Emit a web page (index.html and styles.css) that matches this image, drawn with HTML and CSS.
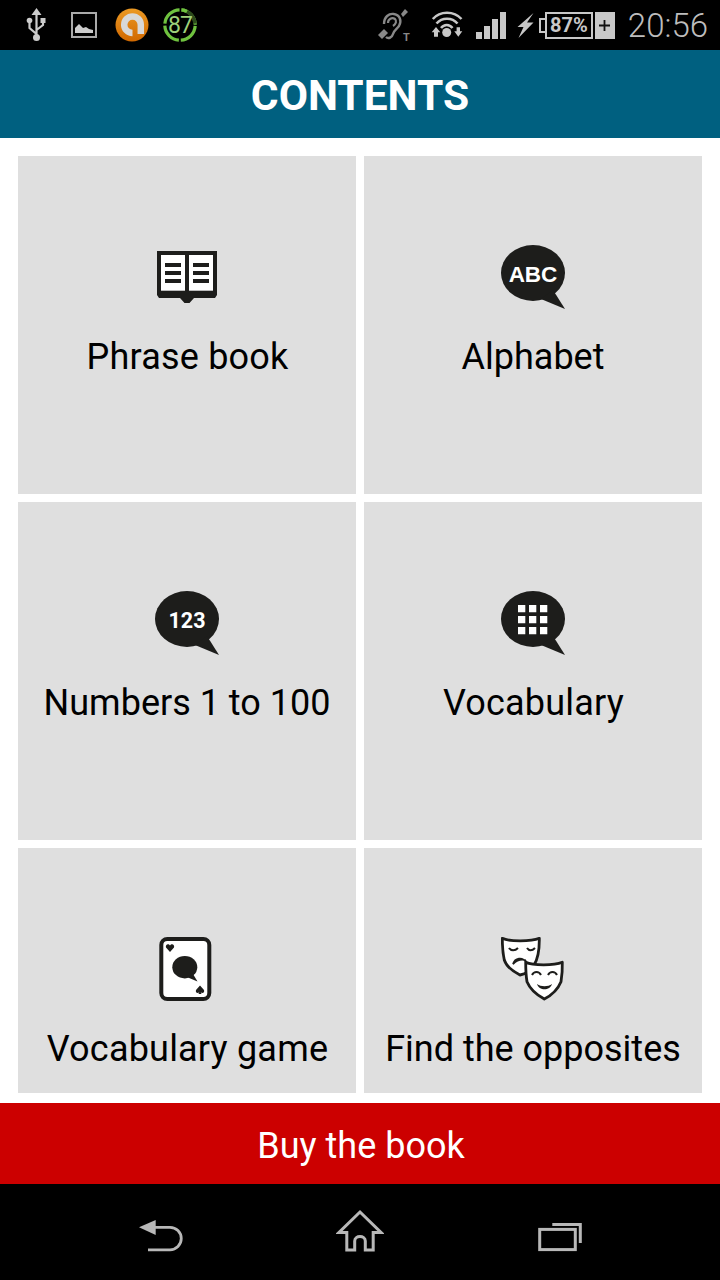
FILE: index.html
```html
<!DOCTYPE html>
<html lang="en">
<head>
  <meta charset="UTF-8">
  <meta name="viewport" content="width=device-width, initial-scale=1.0">
  <title>Contents</title>
  <link rel="stylesheet" href="styles.css">
</head>
<body>
  <div class="status-bar">
    <div class="status-left">
      <svg class="st-usb" width="20" height="34" viewBox="0 0 20 34">
        <path d="M10.500 0L15.500 7H5.500Z" fill="#ccc"/>
        <path d="M10.500 6V30M3.500 13V20L10.500 26M17 13V17L10.500 22" fill="none" stroke="#ccc" stroke-width="2.200"/>
        <circle cx="3.500" cy="12.500" r="2.800" fill="#ccc"/>
        <rect x="14.500" y="10" width="5" height="5" fill="#ccc"/>
        <circle cx="10.500" cy="29.500" r="3.500" fill="#ccc"/>
      </svg>
      <svg class="st-image" width="26" height="26" viewBox="0 0 26 26">
        <rect x="1" y="1" width="24" height="24" fill="none" stroke="#aaa" stroke-width="2"/>
        <path d="M4 21V16L8 12L12 16L15 15L18 17L22 18V21Z" fill="#ccc"/>
      </svg>
      <svg class="st-orange" width="34" height="34" viewBox="0 0 34 34">
        <defs>
          <linearGradient id="orange" x1="0" y1="0" x2="0" y2="1">
            <stop offset="0" stop-color="#ec9a24"/>
            <stop offset="1" stop-color="#d06800"/>
          </linearGradient>
        </defs>
        <circle cx="17" cy="17" r="16.500" fill="url(#orange)"/>
        <path d="M17.500 25A8.300 8.300 0 1 1 25.800 16.700V26" fill="none" stroke="#d8d8d8" stroke-width="6.500"/>
      </svg>
      <svg class="st-ring" width="34" height="34" viewBox="0 0 34 34">
        <circle cx="17" cy="17" r="15.200" fill="none" stroke="#6fc23f" stroke-width="3.200" stroke-dasharray="21.900 2" stroke-dashoffset="-1"/>
        <path d="M18.500 1.900A15.200 15.200 0 0 1 32.100 15.500" fill="none" stroke="#2c4a1c" stroke-width="3.400"/>
        <path d="M18.500 1.900A15.200 15.200 0 0 1 24 3.500" fill="none" stroke="#6fc23f" stroke-width="3.400"/>
        <text x="17" y="25" class="ring-text">87</text>
      </svg>
    </div>
    <div class="status-right">
      <svg class="st-hearing" width="34" height="34" viewBox="0 0 34 34">
        <path d="M7 16C7 9 12 5 17 6C23 7 25 13 22 18C20 21 17 22 16 26C15 30 11 31 9 29" fill="none" stroke="#888" stroke-width="2.400"/>
        <path d="M11 15C11 11 15 9 18 11C20 13 19 16 16 18" fill="none" stroke="#888" stroke-width="2.200"/>
        <path d="M1 27L7 21L11 25L5 31Z" fill="#888"/>
        <path d="M24 6L28 1L31 4L26 9Z" fill="#888"/>
        <text x="29.500" y="32.500" class="hearing-t">T</text>
      </svg>
      <svg class="st-wifi" width="31" height="28" viewBox="0 0 31 28">
        <path d="M0.800 8C8 -0.500 22 -0.500 29.500 8M4.500 12.500C10 6 20 6 25.500 12.500M9 17C12 13 17.500 13 20.500 17" fill="none" stroke="#c8c8c8" stroke-width="2.500"/>
        <circle cx="14.700" cy="21.500" r="4.500" fill="#c8c8c8"/>
        <path d="M4 16L8.300 21.300H6V25.700H2V21.300H-0.300Z" fill="#c8c8c8"/>
        <path d="M26.300 25.700L30.300 20.300H28V16.300H24.600V20.300H22.300Z" fill="#c8c8c8"/>
      </svg>
      <div class="signal">
        <span class="bar bar-1"></span>
        <span class="bar bar-2"></span>
        <span class="bar bar-3"></span>
        <span class="bar bar-4"></span>
      </div>
      <svg class="st-bolt" width="17" height="25" viewBox="0 0 17 25">
        <path d="M16.500 0L0.500 14H6.500L1.500 25L16.500 9.500H10Z" fill="#c8c8c8"/>
      </svg>
      <div class="battery">
        <span class="battery-body">87%</span>
      </div>
      <div class="charge-plus">
        <svg width="11" height="11" viewBox="0 0 11 11"><path d="M5.500 0V11M0 5.500H11" stroke="#111" stroke-width="1.800"/></svg>
      </div>
      <span class="clock">20:56</span>
    </div>
  </div>

  <div class="header">CONTENTS</div>

  <div class="grid">
    <div class="tile">
      <svg class="tile-icon" width="64" height="64" viewBox="0 0 64 64">
        <path d="M2 6H62V50L60 53H39L34.500 58H29.500L25 53H4L2 50Z" fill="#1d1d1b"/>
        <rect x="6" y="10" width="24" height="35.700" fill="#fff"/>
        <rect x="34" y="10" width="24" height="35.700" fill="#fff"/>
        <path d="M10 20H26M10 28H26M10 36H26M38 20H54M38 28H54M38 36H54" stroke="#1d1d1b" stroke-width="4"/>
      </svg>
      <div class="tile-label wide">Phrase book</div>
    </div>
    <div class="tile">
      <svg class="tile-icon" width="64" height="64" viewBox="0 0 64 64">
        <ellipse cx="32" cy="28" rx="32" ry="28" fill="#1d1d1b"/>
        <path d="M40 54L64 64L52 45Z" fill="#1d1d1b"/>
        <text x="32" y="37" class="bubble-text">ABC</text>
      </svg>
      <div class="tile-label">Alphabet</div>
    </div>
    <div class="tile">
      <svg class="tile-icon" width="64" height="64" viewBox="0 0 64 64">
        <ellipse cx="32" cy="28" rx="32" ry="28" fill="#1d1d1b"/>
        <path d="M40 54L64 64L52 45Z" fill="#1d1d1b"/>
        <text x="32" y="37" class="bubble-text bubble-num">123</text>
      </svg>
      <div class="tile-label">Numbers 1 to 100</div>
    </div>
    <div class="tile">
      <svg class="tile-icon" width="64" height="64" viewBox="0 0 64 64">
        <ellipse cx="32" cy="28" rx="32" ry="28" fill="#1d1d1b"/>
        <path d="M40 54L64 64L52 45Z" fill="#1d1d1b"/>
        <path d="M17 14h7.300v7.300h-7.300zM28 14h7.300v7.300h-7.300zM39 14h7.300v7.300h-7.300zM17 25h7.300v7.300h-7.300zM28 25h7.300v7.300h-7.300zM39 25h7.300v7.300h-7.300zM17 36h7.300v7.300h-7.300zM28 36h7.300v7.300h-7.300zM39 36h7.300v7.300h-7.300z" fill="#fff"/>
      </svg>
      <div class="tile-label wide">Vocabulary</div>
    </div>
    <div class="tile">
      <svg class="tile-icon" width="64" height="64" viewBox="0 0 64 64">
        <rect x="6.300" y="2" width="48" height="60" rx="6" fill="#fff" stroke="#1d1d1b" stroke-width="4"/>
        <ellipse cx="29.800" cy="30.200" rx="12.500" ry="11.200" fill="#1d1d1b"/>
        <path d="M33 40.500L42.500 44.500L38 37Z" fill="#1d1d1b"/>
        <path d="M15 15L11 10.500C10 7.500 13.500 6 15 8.500C16.500 6 20 7.500 19 10.500Z" fill="#1d1d1b"/>
        <path d="M45 48.500L49 53C50 56 46.800 57 45.700 55L46.500 57H43.500L44.300 55C43.200 57 40 56 41 53Z" fill="#1d1d1b"/>
      </svg>
      <div class="tile-label wide">Vocabulary game</div>
    </div>
    <div class="tile">
      <svg class="tile-icon" width="64" height="64" viewBox="0 0 64 64">
        <path d="M1.300 1.300C8 4.700 30 4.700 38.300 1.300C38.500 14 37 22 33 28C30 33 25 37 19 38C11 34 5 28 3.300 23C2 17 1.300 8 1.300 1.300Z" fill="#fff" stroke="#1d1d1b" stroke-width="2.800" stroke-linejoin="round"/>
        <path d="M8 11C10 14 14 14 17 11M26 11C28 14 31 14 34 11" fill="none" stroke="#1d1d1b" stroke-width="2"/>
        <path d="M12 27C14 21 21 19 26 26L24 23C20 22 16 23 12 27Z" fill="#1d1d1b" stroke="#1d1d1b" stroke-width="1.800"/>
        <path d="M24.700 25.300C32 28.700 53 28.700 61.300 25.300C61.500 33 61 39 60 44.700C57 52 51 58 43.300 62C36 58 29 52 26 44.700C25 39 24.700 33 24.700 25.300Z" fill="#fff" stroke="#1d1d1b" stroke-width="2.800" stroke-linejoin="round"/>
        <path d="M31 38C33 34 38 34 40 38M47 38C49 34 54 34 56 38" fill="none" stroke="#1d1d1b" stroke-width="2"/>
        <path d="M36 47C40 50 47 50 51 47C49 54 38 54 36 47Z" fill="#1d1d1b"/>
      </svg>
      <div class="tile-label">Find the opposites</div>
    </div>
  </div>

  <div class="buy-btn">Buy the book</div>

  <div class="nav-bar">
    <div class="nav-cell">
      <svg width="48" height="44" viewBox="0 0 48 44">
        <path d="M3 18.300L19.700 11V26Z" fill="#b8b8b8"/>
        <path d="M18 18.300H34A11.250 11.250 0 0 1 34 40.800H12" fill="none" stroke="#b8b8b8" stroke-width="2.800"/>
      </svg>
    </div>
    <div class="nav-cell">
      <svg width="48" height="44" viewBox="0 0 48 44">
        <path d="M24 3L45 23.500H37.200V41H29.300V32C29.300 26 18.700 26 18.700 32V41H10.800V23.500H3Z" fill="none" stroke="#b8b8b8" stroke-width="3"/>
      </svg>
    </div>
    <div class="nav-cell">
      <svg width="48" height="44" viewBox="0 0 48 44">
        <rect x="3.700" y="20.400" width="35.600" height="20.200" fill="none" stroke="#b8b8b8" stroke-width="3"/>
        <path d="M16.300 15.400H44.300V34" fill="none" stroke="#b8b8b8" stroke-width="3"/>
      </svg>
    </div>
  </div>
</body>
</html>
```

FILE: styles.css
```css
body {
  margin: 0;
  height: 1280px;
  overflow: hidden;
  background-color: #fff;
  font-family: Roboto, "Liberation Sans", sans-serif;
}

/* status bar */
.status-bar {
  height: 50px;
  background-color: #000;
  display: flex;
  justify-content: space-between;
  align-items: center;
}
.status-left {
  display: flex;
  align-items: center;
  padding-left: 26px;
}
.status-left svg, .status-right svg {
  display: block;
  overflow: visible;
}
.st-image { margin-left: 25px; }
.st-orange { margin-left: 18px; }
.st-ring { margin-left: 14px; }
.ring-text {
  font-family: Roboto, sans-serif;
  font-size: 23px;
  letter-spacing: -1px;
  fill: #9ed07a;
  text-anchor: middle;
}
.status-right {
  display: flex;
  align-items: center;
  padding-right: 12px;
}
.hearing-t {
  font-size: 11px;
  font-weight: bold;
  fill: #888;
  text-anchor: middle;
}
.st-wifi { margin-left: 21px; }
.signal {
  display: flex;
  align-items: flex-end;
  gap: 2px;
  height: 27px;
  margin-left: 13px;
}
.bar {
  width: 6px;
  background-color: #c8c8c8;
}
.bar-1 { height: 7px; }
.bar-2 { height: 13px; }
.bar-3 { height: 20px; }
.bar-4 { height: 27px; }
.st-bolt { margin-left: 11px; }
.battery {
  margin-left: 5px;
  display: flex;
  align-items: center;
}
.battery::before {
  content: "";
  box-sizing: border-box;
  width: 6px;
  height: 15px;
  border: 2px solid #c8c8c8;
  border-right: none;
}
.battery-body {
  box-sizing: border-box;
  width: 48px;
  height: 27px;
  border: 2px solid #c8c8c8;
  color: #c8c8c8;
  font-size: 20px;
  font-weight: bold;
  line-height: 23px;
  text-align: center;
}
.charge-plus {
  width: 20px;
  height: 27px;
  margin-left: 2px;
  background-color: #c8c8c8;
  display: flex;
  align-items: center;
  justify-content: center;
}
.clock {
  margin-left: 13px;
  color: #bdbdbd;
  font-size: 33px;
  font-weight: 300;
}

/* header */
.header {
  height: 88px;
  line-height: 92px;
  background-color: #006080;
  color: #fff;
  font-size: 42.5px;
  font-weight: bold;
  text-align: center;
}

/* grid of tiles */
.grid {
  display: grid;
  grid-template-columns: 338px 338px;
  grid-template-rows: 338px 338px 245px;
  gap: 8px;
  padding: 18px 18px 10px;
}
.tile {
  background-color: #dfdfdf;
  padding-top: 89px;
  text-align: center;
}
.tile-icon {
  display: block;
  margin: 0 auto;
}
.tile-label {
  margin-top: 26px;
  color: #000;
  font-size: 36px;
  line-height: 44px;
  white-space: nowrap;
}
.tile-label.wide {
  letter-spacing: 0.2px;
  padding-left: 1px;
}
.bubble-text {
  font-family: "Liberation Sans", sans-serif;
  font-size: 22.5px;
  font-weight: bold;
  fill: #fff;
  text-anchor: middle;
}
.bubble-num {
  font-family: Roboto, sans-serif;
  font-size: 21.5px;
}

/* bottom */
.buy-btn {
  height: 81px;
  line-height: 86px;
  padding-left: 2px;
  background-color: #cc0000;
  color: #fff;
  font-size: 36px;
  text-align: center;
}
.nav-bar {
  height: 96px;
  box-sizing: border-box;
  padding-top: 25px;
  background-color: #000;
  display: flex;
  justify-content: center;
}
.nav-cell {
  width: 200px;
  text-align: center;
}
```
